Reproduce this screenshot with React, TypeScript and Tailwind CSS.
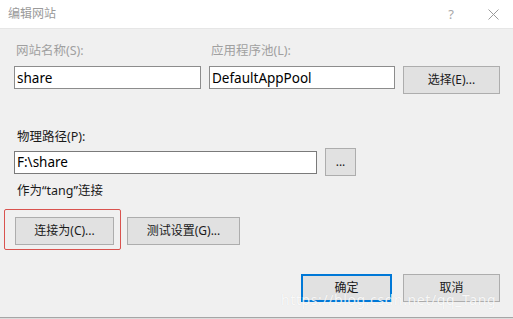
import React from "react";

const font = { fontFamily: '"Segoe UI", "Noto Sans", "Noto Sans CJK SC", sans-serif' };

function Btn({ children, className = "" }: { children: React.ReactNode; className?: string }) {
  return (
    <div
      className={`flex h-[28px] items-center justify-center border border-[#adadad] bg-[#e1e1e1] text-[12px] text-[#1a1a1a] ${className}`}
    >
      {children}
    </div>
  );
}

export default function App() {
  return (
    <div className="relative h-[319px] w-[513px] overflow-hidden bg-[#f0f0f0] text-[12px] leading-[16px]" style={font}>
      <div className="flex h-[29px] items-center justify-between border-b border-[#e6e6e6] bg-white pl-[8px] pr-[14px]">
        <span className="text-[12px] text-[#9a9a9a]">编辑网站</span>
        <div className="flex items-center gap-[34px] text-[#a8a8a8]">
          <span className="text-[13px]">?</span>
          <svg width="11" height="11" viewBox="0 0 11 11" stroke="#9a9a9a" strokeWidth="1">
            <path d="M0.5 0.5L10.5 10.5M10.5 0.5L0.5 10.5" />
          </svg>
        </div>
      </div>

      <div className="flex flex-col pl-[14px] pr-[13px] pt-[14px]">
        <div className="flex">
          <div className="w-[195px] pl-[2px] text-[12.5px] text-[#a0a0a0]">网站名称(S):</div>
          <div className="pl-[2px] text-[12.5px] text-[#a0a0a0]">应用程序池(L):</div>
        </div>
        <div className="mt-[7px] flex items-start">
          <div className="flex h-[23px] w-[187px] items-center border border-[#8c8c8c] bg-white pl-[2px] text-[13.5px] text-black">share</div>
          <div className="ml-[8px] flex h-[23px] w-[186px] items-center border border-[#8c8c8c] bg-white pl-[2px] text-[13.5px] text-black">DefaultAppPool</div>
          <Btn className="ml-[8px] w-[97px]">选择(E)...</Btn>
        </div>

        <div className="mt-[35px] pl-[3px] text-[12.5px] text-[#1a1a1a]">物理路径(P):</div>
        <div className="mt-[3px] flex items-center">
          <div className="flex h-[23px] w-[303px] items-center border border-[#7a7a7a] bg-white pl-[2px] text-[13.5px] text-black">F:\share</div>
          <Btn className="ml-[8px] w-[31px] leading-none">...</Btn>
        </div>

        <div className="mt-[7px] pl-[3px] text-[12.5px] text-[#1a1a1a]">作为“tang”连接</div>

        <div className="mt-[10px] flex items-start">
          <div className="-ml-[10px] h-[41px] w-[117px] rounded-[2px] border border-[#d9534f] pl-[10px] pt-[7px]">
            <Btn className="w-[99px]">连接为(C)...</Btn>
          </div>
          <Btn className="ml-[6px] mt-[8px] w-[113px]">测试设置(G)...</Btn>
        </div>

        <div className="mt-[24px] flex justify-end">
          <div className="flex h-[28px] w-[91px] items-center justify-center border-2 border-[#0078d7] bg-[#e1e1e1] text-[12px] text-[#1a1a1a]">确定</div>
          <Btn className="ml-[11px] w-[97px]">取消</Btn>
        </div>
      </div>

      <div className="absolute bottom-[11px] left-[281px] text-[14px] leading-[16px] tracking-[0.6px] text-white/85" style={{ textShadow: "0 0 1px rgba(0,0,0,0.12)" }}>
        https://blog.csdn.net/qq_Tang
      </div>
      <div className="absolute bottom-0 left-0 h-[2px] w-full border-t border-[#a6a6a6] bg-[#dcdcdc]" />
    </div>
  );
}
